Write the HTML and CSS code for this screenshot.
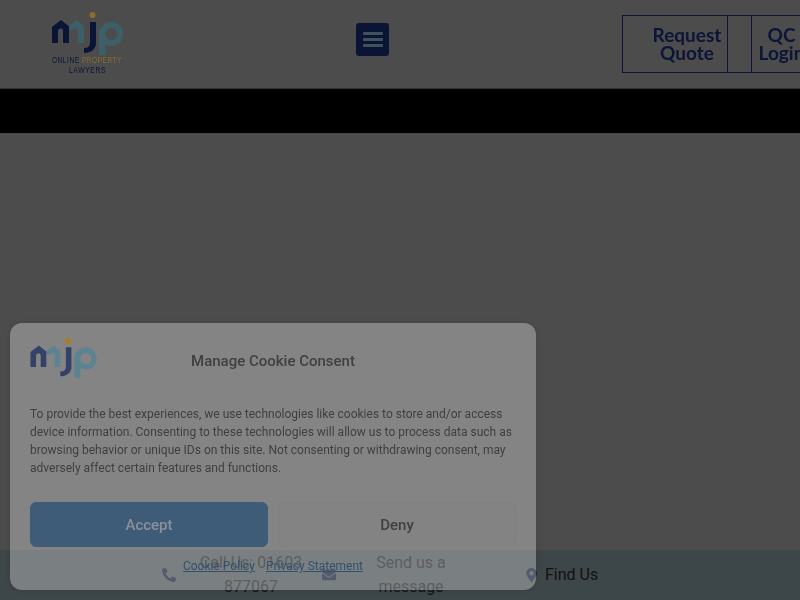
FILE: index.html
```html
<!DOCTYPE html>
<html lang="en">
<head>
<meta charset="utf-8">
<title>MJP Online Property Lawyers</title>
<link rel="stylesheet" href="styles.css">
</head>
<body>
<div class="page">
  <header class="site-header">
    <a class="brand" href="#">
      <svg class="brand-mark" viewBox="0 0 72 62" width="72" height="62" aria-hidden="true">
        <path class="ink-teal" d="M17 14l8-6 7 6.500V31h-6V18l-2-2-4 2h-3z"/>
        <path class="ink-navy" d="M0 31V15L9 8l8 6.500V31h-6V18l-2-2-3 2v13z"/>
        <path class="ink-navy" d="M38 10h6v21c0 6-5 10-12 10v-5c4 0 6-2 6-5z"/>
        <circle class="ink-gold" cx="40.500" cy="3" r="3"/>
        <path class="ink-teal" fill-rule="evenodd" d="M47 22c0-7 6-12 12.500-12S71 15 71 22s-5 12-11.500 12c-2 0-4-.5-6-2v11h-6.500zm12.500-6a6 6 0 1 0 0 12 6 6 0 0 0 0-12z"/>
        <text class="brand-text" x="0" y="51" textLength="70" lengthAdjust="spacingAndGlyphs"><tspan class="ink-navy">ONLINE </tspan><tspan class="ink-gold">PROPERTY</tspan></text>
        <text class="brand-text ink-navy" x="17" y="61" textLength="37" lengthAdjust="spacingAndGlyphs">LAWYERS</text>
      </svg>
    </a>
    <button class="menu-toggle" aria-label="Menu"><span></span><span></span><span></span></button>
    <nav class="actions">
      <a class="action action-quote" href="#">Request Quote</a>
      <span class="action action-gap"></span>
      <a class="action action-login" href="#">QC Login</a>
    </nav>
  </header>
  <div class="black-bar"></div>
  <main class="content"></main>
</div>

<div class="contact-bar">
  <div class="contact contact-call">
    <svg class="contact-icon" viewBox="0 0 512 512" width="14" height="14"><path d="M493 24 389 0c-11-3-23 3-28 14l-48 112c-4 10-1 21 7 28l61 50c-36 76-98 139-176 176l-50-61c-7-8-18-11-28-7L15 361C3 366-3 378 0 389l24 104c2 11 12 19 23 19 256 0 465-207 465-465 0-11-8-21-19-23z" transform="matrix(-1 0 0 1 512 0)"/></svg>
    <span class="contact-label">Call Us: 01603 877067</span>
  </div>
  <div class="contact contact-mail">
    <svg class="contact-icon" viewBox="0 0 512 512" width="14" height="14"><path d="M502 191c4-3 10 0 10 5v204c0 26-22 48-48 48H48c-26 0-48-22-48-48V196c0-5 6-8 10-5 22 17 52 39 154 113 21 15 57 48 92 48s72-33 92-48c102-74 132-96 154-113zM256 320c23 0 57-29 74-42 133-96 143-105 174-129 6-5 8-12 8-19v-18c0-26-22-48-48-48H48C22 64 0 86 0 112v18c0 7 2 14 8 19 31 24 41 33 174 129 17 13 51 42 74 42z"/></svg>
    <span class="contact-label">Send us a message</span>
  </div>
  <div class="contact contact-find">
    <svg class="contact-icon" viewBox="0 0 384 512" width="11" height="14"><path d="M172 502C27 291 0 254 0 192 0 86 86 0 192 0s192 86 192 192c0 62-27 99-172 310-9 14-31 14-40 0zm20-230a80 80 0 1 0 0-160 80 80 0 0 0 0 160z"/></svg>
    <span class="contact-label">Find Us</span>
  </div>
</div>

<div class="overlay"></div>

<aside class="cookie" aria-label="Manage Cookie Consent">
  <div class="cookie-head">
    <svg class="cookie-logo" viewBox="0 0 72 44" width="68" height="41" aria-hidden="true">
      <path class="soft-teal" d="M17 14l8-6 7 6.500V31h-6V18l-2-2-4 2h-3z"/>
      <path class="soft-blue" d="M0 31V15L9 8l8 6.500V31h-6V18l-2-2-3 2v13z"/>
      <path class="soft-blue" d="M38 10h6v21c0 6-5 10-12 10v-5c4 0 6-2 6-5z"/>
      <circle class="soft-gold" cx="40.500" cy="3.500" r="3.500"/>
      <path class="soft-teal" fill-rule="evenodd" d="M47 22c0-7 6-12 12.500-12S71 15 71 22s-5 12-11.500 12c-2 0-4-.5-6-2v11h-6.500zm12.500-6a6 6 0 1 0 0 12 6 6 0 0 0 0-12z"/>
    </svg>
    <h2 class="cookie-title">Manage Cookie Consent</h2>
  </div>
  <p class="cookie-text">To provide the best experiences, we use technologies like cookies to store and/or access device information. Consenting to these technologies will allow us to process data such as browsing behavior or unique IDs on this site. Not consenting or withdrawing consent, may adversely affect certain features and functions.</p>
  <div class="cookie-buttons">
    <button class="cookie-btn cookie-accept">Accept</button>
    <button class="cookie-btn cookie-deny">Deny</button>
  </div>
  <div class="cookie-links">
    <a href="#">Cookie Policy</a>
    <a href="#">Privacy Statement</a>
  </div>
</aside>
</body>
</html>
```
FILE: styles.css
```css
* { box-sizing: border-box; }
html, body { margin: 0; height: 100%; overflow: hidden; background: #fff; }
body { font-family: Roboto, "Liberation Sans", sans-serif; }
.page { width: 800px; height: 600px; display: flex; flex-direction: column; overflow: hidden; }
.site-header { height: 89px; flex: none; display: flex; align-items: flex-start; padding-left: 52px; background: #fff; border-bottom: 1px solid #aaa; }
.brand { position: relative; z-index: 15; width: 72px; margin-top: 12px; display: block; flex: none; }
.brand-mark { display: block; overflow: visible; }
.brand-text { font-family: "Liberation Sans Narrow", "Liberation Sans", sans-serif; font-size: 9.500px; letter-spacing: .8px; }
.ink-navy { fill: #0a1434; }
.ink-teal { fill: #3d6068; }
.ink-gold { fill: #8f6d2c; }
.soft-blue { fill: #34426a; }
.soft-teal { fill: #5c8490; }
.soft-gold { fill: #a08030; }
.menu-toggle { position: relative; z-index: 15; width: 33px; height: 33px; margin: 23px 0 0 232px; padding: 0; border: 0; border-radius: 3px; background: #0a1434; display: flex; flex-direction: column; justify-content: center; align-items: center; gap: 3px; flex: none; }
.menu-toggle span { width: 20px; height: 3px; border-radius: 1px; background: #42525a; }
.actions { position: relative; z-index: 15; display: flex; margin: 15px 0 0 233px; height: 58px; flex: none; }
.action { height: 58px; border: 1px solid #0c1538; color: #0c1538; font-family: Lato, sans-serif; font-weight: 700; font-size: 19px; line-height: 18px; text-align: center; text-decoration: none; display: flex; align-items: center; }
.action-quote { width: 106px; padding-left: 30px; padding-right: 6px; justify-content: center; }
.action-gap { width: 24px; border-left: 0; }
.action-login { width: 60px; border-left: 0; justify-content: center; }
.black-bar { height: 44px; flex: none; background: #000; }
.content { flex: 1; background: #fff; border-top: 1px solid #eee; }

.contact-bar { position: fixed; z-index: 5; left: 0; right: 0; bottom: 0; height: 50px; background: #cde9f2; color: #444; }
.contact { display: flex; align-items: center; font-size: 16px; line-height: 24px; }
.contact-icon { fill: #1f3a93; flex: none; }
.contact-call { position: absolute; left: 162px; top: 0; height: 50px; gap: 12px; }
.contact-call .contact-label { width: 126px; text-align: center; }
.contact-mail { position: absolute; left: 322px; top: 0; height: 50px; gap: 22px; }
.contact-mail .contact-label { width: 106px; text-align: center; }
.contact-find { position: absolute; left: 526px; top: 0; height: 50px; gap: 8px; }

.overlay { position: fixed; z-index: 10; inset: 0; background: rgba(0,0,0,.7); }

.cookie { position: fixed; z-index: 20; left: 10px; top: 323px; width: 526px; height: 267px; padding: 0 20px; border-radius: 12px; background: rgba(255,255,255,.31); box-shadow: 0 0 10px rgba(0,0,0,.12); color: #404040; display: flex; flex-direction: column; }
.cookie-head { display: flex; align-items: flex-start; height: 64px; padding-top: 15px; }
.cookie-logo { flex: none; display: block; }
.cookie-title { flex: 1; margin: 13px 0 0; padding-right: 68px; font-size: 15px; line-height: 20px; font-weight: 500; color: #404040; text-align: center; white-space: nowrap; }
.cookie-text { margin: 18px 0 0; font-size: 12px; line-height: 18px; }
.cookie-buttons { display: flex; gap: 10px; margin-top: 25px; }
.cookie-btn { width: 238px; height: 45px; border-radius: 6px; font: 500 15px Roboto, sans-serif; padding: 0; }
.cookie-accept { background: #3e5c78; color: #8c9096; border: 1px solid #3e5c78; }
.cookie-deny { flex: 1; background: #838383; color: #404040; border: 1px solid #808080; }
.cookie-links { display: flex; justify-content: center; gap: 11px; margin-top: 11px; font-size: 12px; line-height: 17px; }
.cookie-links a { color: #34506c; }
```
